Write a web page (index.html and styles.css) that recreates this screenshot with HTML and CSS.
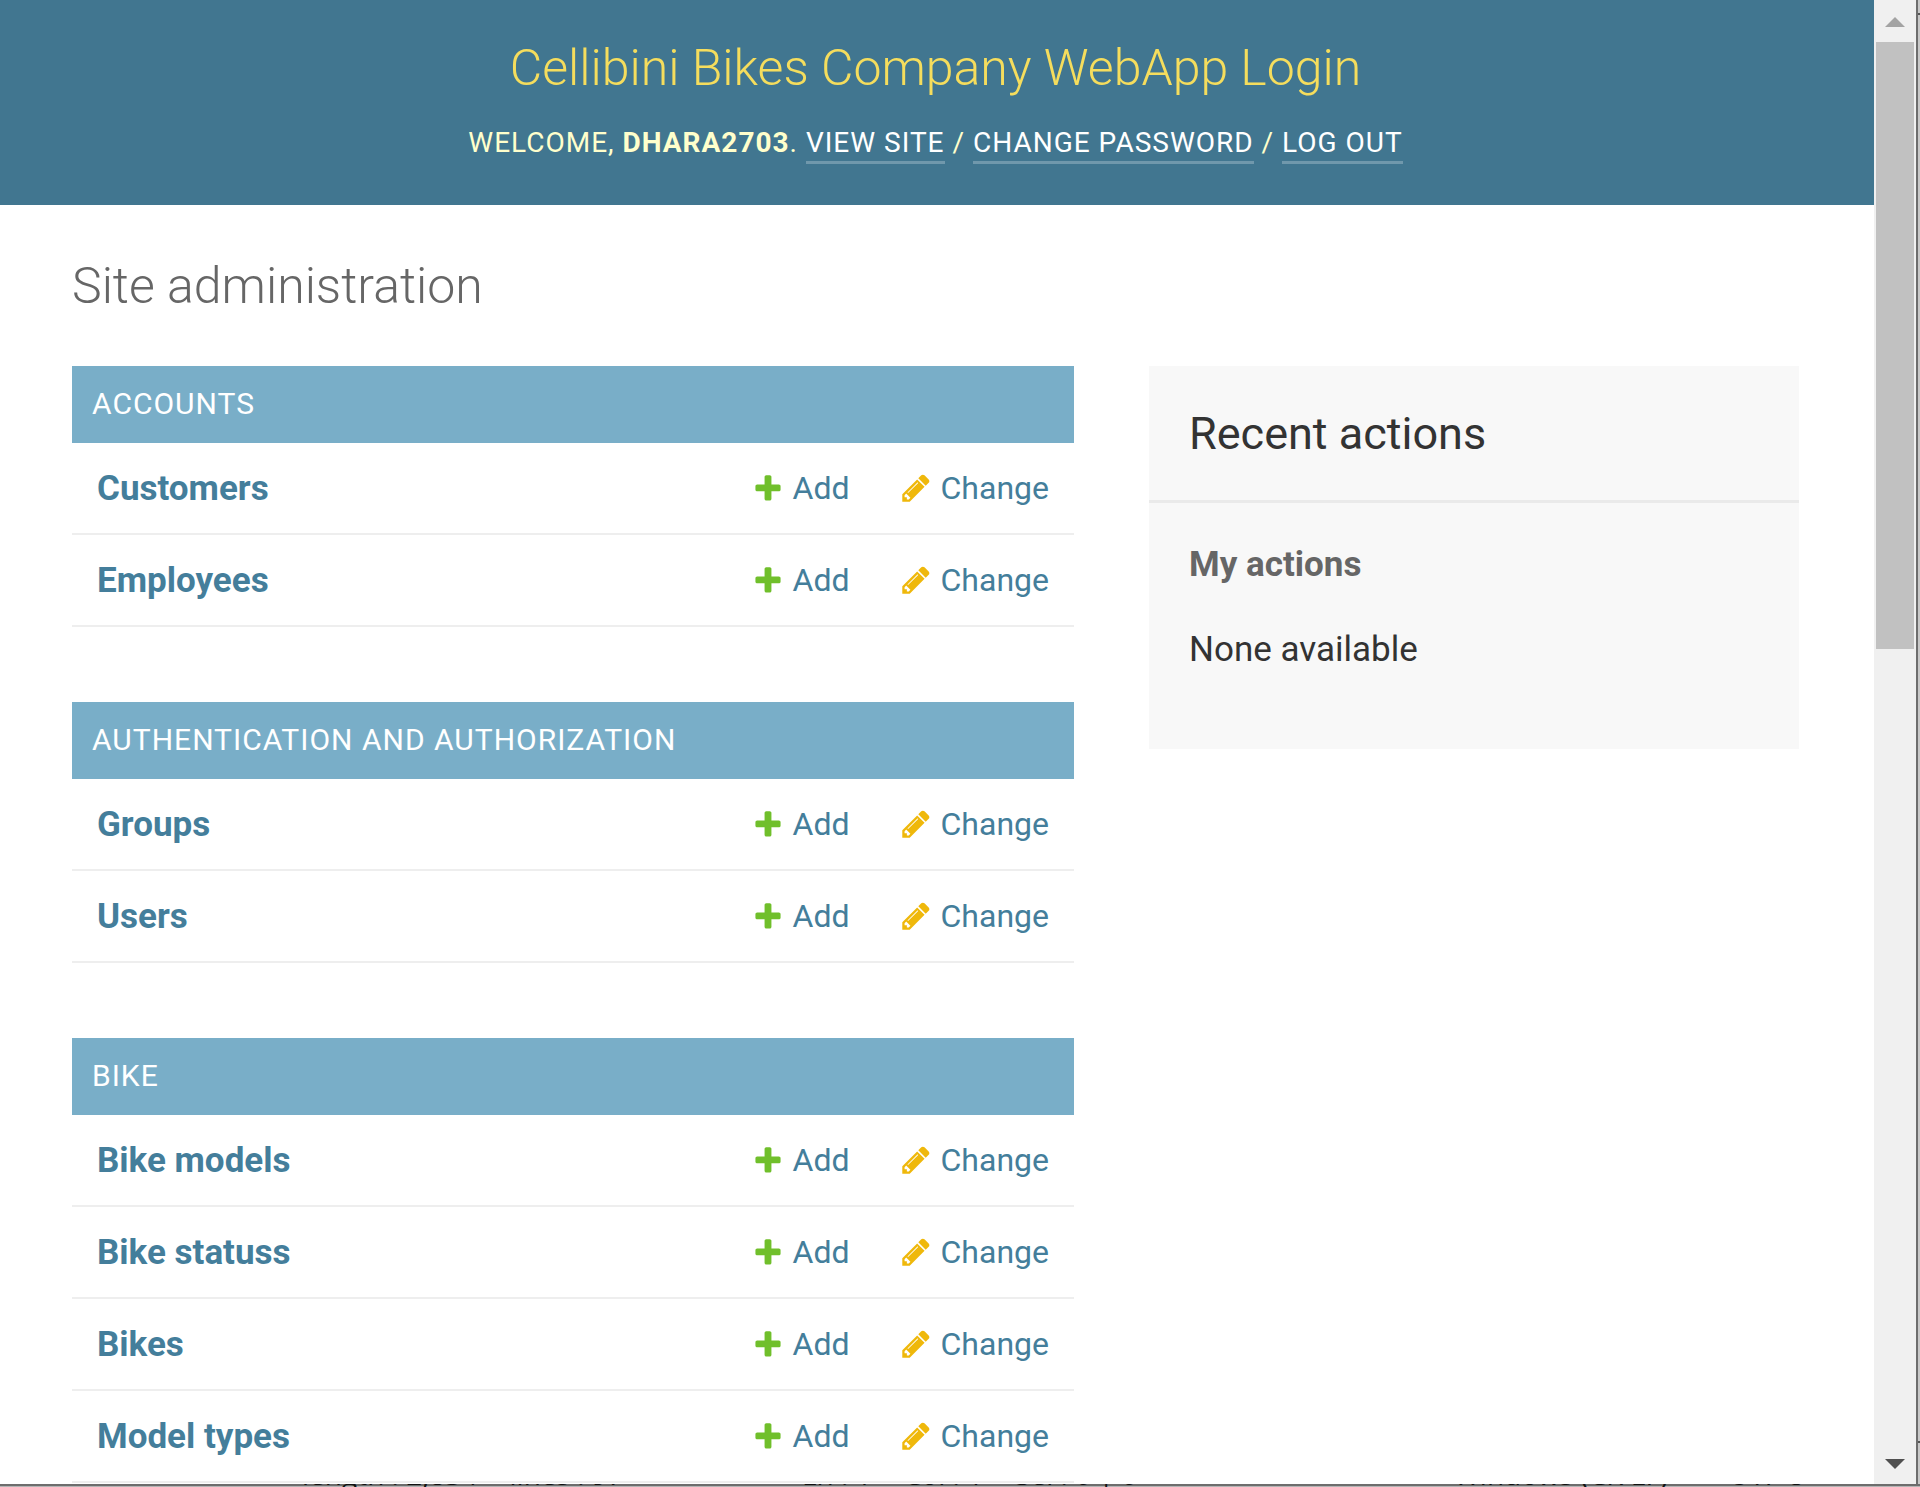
FILE: index.html
```html
<!DOCTYPE html>
<html lang="en">
<head>
<meta charset="utf-8">
<meta name="viewport" content="width=device-width, initial-scale=1">
<title>Site administration | Cellibini Bikes Company WebApp Login</title>
<link rel="stylesheet" href="styles.css">
</head>
<body>
<svg class="sprite" aria-hidden="true">
  <symbol id="icon-add" viewBox="0 0 1792 1792"><path fill="#70bf2b" d="M1600 796v192q0 40-28 68t-68 28h-416v416q0 40-28 68t-68 28H800q-40 0-68-28t-28-68v-416H288q-40 0-68-28t-28-68V796q0-40 28-68t68-28h416V284q0-40 28-68t68-28h192q40 0 68 28t28 68v416h416q40 0 68 28t28 68z"/></symbol>
  <symbol id="icon-change" viewBox="0 0 1792 1792"><path fill="#efb80b" d="M491 1536l91-91-235-235-91 91v107h128v128h107zm523-928q0-22-22-22-10 0-17 7l-542 542q-7 7-7 17 0 22 22 22 10 0 17-7l542-542q7-7 7-17zm-54-192l416 416-832 832H128v-416zm683 96q0 53-37 90l-166 166-416-416 166-165q36-38 90-38 53 0 91 38l235 234q37 39 37 91z"/></symbol>
</svg>
<div class="window">
  <div class="page">
    <header class="header">
      <div class="site-name"><a href="#">Cellibini Bikes Company WebApp Login</a></div>
      <div class="user-tools">Welcome, <strong>dhara2703</strong>. <a href="#">View site</a> / <a href="#">Change password</a> / <a href="#">Log out</a></div>
    </header>
    <main class="content">
      <h1 class="title">Site administration</h1>
      <div class="columns">
        <div class="app-list">
          <table class="module">
            <caption><a href="#">Accounts</a></caption>
            <tr><th scope="row"><a href="#">Customers</a></th><td><a class="action" href="#"><svg class="icon"><use href="#icon-add"/></svg>Add</a></td><td><a class="action" href="#"><svg class="icon"><use href="#icon-change"/></svg>Change</a></td></tr>
            <tr><th scope="row"><a href="#">Employees</a></th><td><a class="action" href="#"><svg class="icon"><use href="#icon-add"/></svg>Add</a></td><td><a class="action" href="#"><svg class="icon"><use href="#icon-change"/></svg>Change</a></td></tr>
          </table>
          <table class="module">
            <caption><a href="#">Authentication and Authorization</a></caption>
            <tr><th scope="row"><a href="#">Groups</a></th><td><a class="action" href="#"><svg class="icon"><use href="#icon-add"/></svg>Add</a></td><td><a class="action" href="#"><svg class="icon"><use href="#icon-change"/></svg>Change</a></td></tr>
            <tr><th scope="row"><a href="#">Users</a></th><td><a class="action" href="#"><svg class="icon"><use href="#icon-add"/></svg>Add</a></td><td><a class="action" href="#"><svg class="icon"><use href="#icon-change"/></svg>Change</a></td></tr>
          </table>
          <table class="module">
            <caption><a href="#">Bike</a></caption>
            <tr><th scope="row"><a href="#">Bike models</a></th><td><a class="action" href="#"><svg class="icon"><use href="#icon-add"/></svg>Add</a></td><td><a class="action" href="#"><svg class="icon"><use href="#icon-change"/></svg>Change</a></td></tr>
            <tr><th scope="row"><a href="#">Bike statuss</a></th><td><a class="action" href="#"><svg class="icon"><use href="#icon-add"/></svg>Add</a></td><td><a class="action" href="#"><svg class="icon"><use href="#icon-change"/></svg>Change</a></td></tr>
            <tr><th scope="row"><a href="#">Bikes</a></th><td><a class="action" href="#"><svg class="icon"><use href="#icon-add"/></svg>Add</a></td><td><a class="action" href="#"><svg class="icon"><use href="#icon-change"/></svg>Change</a></td></tr>
            <tr><th scope="row"><a href="#">Model types</a></th><td><a class="action" href="#"><svg class="icon"><use href="#icon-add"/></svg>Add</a></td><td><a class="action" href="#"><svg class="icon"><use href="#icon-change"/></svg>Change</a></td></tr>
          </table>
        </div>
        <aside class="recent">
          <h2>Recent actions</h2>
          <div class="recent-body">
            <h3>My actions</h3>
            <p>None available</p>
          </div>
        </aside>
      </div>
    </main>
  </div>
  <div class="scrollbar">
    <button class="scroll-button up" type="button" aria-label="Scroll up"><svg width="20" height="10" viewBox="0 0 20 10"><path d="M10 0L20 10H0z"/></svg></button>
    <div class="track"><div class="thumb"></div></div>
    <button class="scroll-button down" type="button" aria-label="Scroll down"><svg width="20" height="10" viewBox="0 0 20 10"><path d="M0 0H20L10 10z"/></svg></button>
  </div>
  <div class="window-edge"></div>
</div>
<footer class="status-bar">
  <div class="status-file"><span>length : 2,834</span><span>lines : 97</span></div>
  <div class="status-caret"><span>Ln : 1</span><span>Col : 1</span><span>Sel : 0 | 0</span></div>
  <div class="status-eol">Windows (CR LF)</div>
  <div class="status-encoding">UTF-8</div>
</footer>
</body>
</html>
```

FILE: styles.css
```css
* { box-sizing: border-box; }

body {
  margin: 0;
  height: 100vh;
  display: flex;
  flex-direction: column;
  overflow: hidden;
  background: #fff;
  color: #333;
  font-family: Roboto, "Liberation Sans", sans-serif;
  font-size: 35px;
  line-height: 42px;
}

a { color: #447e9b; text-decoration: none; }
h1, h2, h3, p { margin: 0; }

.sprite { display: none; }

.window {
  flex: 1;
  min-height: 0;
  display: flex;
}

.page {
  flex: 1;
  min-width: 0;
  overflow: hidden;
}

/* Header */
.header {
  padding: 38px 75px 45px 72px;
  background: #417690;
  color: #ffc;
  text-align: center;
}

.site-name {
  margin-bottom: 28px;
  font-size: 50px;
  font-weight: 300;
  line-height: 60px;
}

.site-name a { color: #f5dd5d; }

.user-tools {
  font-size: 28px;
  line-height: 34px;
  letter-spacing: 1px;
  text-transform: uppercase;
}

.user-tools a {
  padding-bottom: 2px;
  border-bottom: 3px solid rgba(255, 255, 255, 0.25);
  color: #fff;
}

/* Content */
.content { padding: 51px 75px 0 72px; }

.title {
  margin-bottom: 50px;
  color: #666;
  font-size: 50px;
  font-weight: 300;
  line-height: 60px;
}

.columns {
  display: flex;
  align-items: flex-start;
  gap: 75px;
}

.app-list {
  flex: 1;
  display: flex;
  flex-direction: column;
  gap: 75px;
}

.module {
  width: 100%;
  border-collapse: separate;
  border-spacing: 0;
}

.module caption {
  height: 77px;
  padding: 0 20px;
  background: #79aec8;
  font-size: 30px;
  line-height: 76px;
  letter-spacing: 1px;
  text-align: left;
  text-transform: uppercase;
}

.module caption a { color: #fff; }

.module th,
.module td {
  height: 92px;
  padding: 0 25px;
  border-bottom: 2px solid #eee;
  text-align: left;
  vertical-align: middle;
  white-space: nowrap;
}

.module th {
  width: 100%;
  padding-top: 2px;
  font-weight: 700;
}

.module td { font-size: 32px; }

.action {
  display: flex;
  align-items: center;
  gap: 9px;
}

.icon {
  flex: none;
  width: 32px;
  height: 32px;
}

/* Recent actions */
.recent {
  flex: none;
  width: 650px;
  background: #f8f8f8;
}

.recent h2 {
  padding: 41px 40px 39px;
  border-bottom: 3px solid #eaeaea;
  font-size: 45px;
  font-weight: 400;
  line-height: 54px;
}

.recent-body { padding: 41px 40px 78px; }

.recent h3 {
  margin-bottom: 43px;
  color: #666;
  font-size: 35px;
  font-weight: 700;
}

/* Window frame */
.scrollbar {
  flex: none;
  width: 42px;
  display: flex;
  flex-direction: column;
  background: #f0f0f0;
}

.scroll-button {
  height: 42px;
  padding: 2px 0 0;
  border: 0;
  background: none;
  display: flex;
  align-items: center;
  justify-content: center;
}

.up { fill: #a3a3a3; }
.down { fill: #505050; }

.track {
  flex: 1;
  padding: 0 2px;
}

.thumb {
  height: 43.36%;
  background: #c1c1c1;
}

.window-edge {
  flex: none;
  width: 4px;
  border-left: 2px solid #6d6d6d;
  background: linear-gradient(#555, #555) 0 13px / 100% 2px no-repeat,
    linear-gradient(#555, #555) 0 calc(100% - 41px) / 100% 2px no-repeat,
    #c8c8c8;
}

.status-bar {
  height: 3px;
  padding-left: 302px;
  overflow: hidden;
  display: flex;
  align-items: flex-end;
  background: linear-gradient(#6d6d6d 2px, #b4b4b4 2px);
  color: #111;
  font-family: "Open Sans", sans-serif;
  font-size: 28px;
  line-height: 26px;
  white-space: nowrap;
}

.status-file,
.status-caret { display: flex; gap: 32px; }
.status-file { flex: 500; }
.status-caret { flex: 652; }
.status-eol { flex: 275; }
.status-encoding { flex: 191; }
.status-bar > div { min-width: 0; flex-basis: 0; }
```
